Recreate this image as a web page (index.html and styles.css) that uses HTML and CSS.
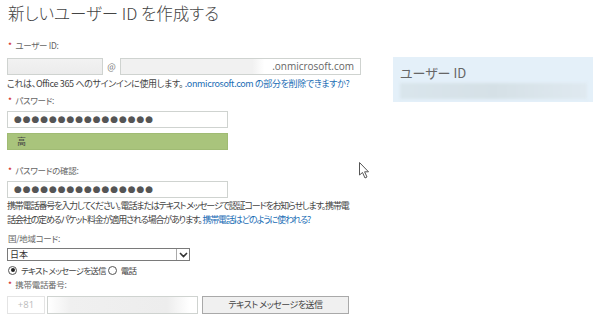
FILE: index.html
```html
<!DOCTYPE html>
<html lang="ja">
<head>
<meta charset="utf-8">
<title>新しいユーザー ID を作成する</title>
<link rel="stylesheet" href="styles.css">
</head>
<body>
<div class="page">
  <div class="form">
    <h1 class="title">新しいユーザー ID を作成する</h1>

    <div class="label l-user"><span class="req">*</span> ユーザー ID:</div>
    <div class="row-user">
      <div class="input input-name"></div>
      <span class="at">@</span>
      <div class="input input-domain"><span class="domain">.onmicrosoft.com</span></div>
    </div>
    <div class="help">これは、Office 365 へのサインインに使用します。 <a class="link" href="#">.onmicrosoft.com の部分を削除できますか?</a></div>

    <div class="label l-pass"><span class="req">*</span> パスワード:</div>
    <div class="input input-pass"><span class="dots">●●●●●●●●●●●●●●●●</span></div>
    <div class="strength">高</div>

    <div class="label l-confirm"><span class="req">*</span> パスワードの確認:</div>
    <div class="input input-pass input-confirm"><span class="dots">●●●●●●●●●●●●●●●●</span></div>
    <p class="para">携帯電話番号を入力してください。電話またはテキスト メッセージで認証コードをお知らせします。携帯電<br>話会社の定めるパケット料金が適用される場合があります。 <a class="link" href="#">携帯電話はどのように使われる?</a></p>

    <div class="label l-country">国/地域コード:</div>
    <div class="select"><span class="sel-text">日本</span><span class="sel-btn"><svg width="9" height="6" viewBox="0 0 9 6"><path d="M1 1 L4.5 4.5 L8 1" fill="none" stroke="#333" stroke-width="1.6"/></svg></span></div>
    <div class="radios">
      <span class="radio on"></span><span class="r-label">テキスト メッセージを送信</span>
      <span class="radio"></span><span class="r-label">電話</span>
    </div>

    <div class="label l-phone"><span class="req">*</span> 携帯電話番号:</div>
    <div class="row-phone">
      <div class="cc">+81</div>
      <div class="input input-phone"></div>
      <div class="btn">テキスト メッセージを送信</div>
    </div>
  </div>

  <div class="side">
    <div class="side-title">ユーザー ID</div>
    <div class="side-blur"></div>
  </div>
</div>
<svg class="cursor" width="12" height="18" viewBox="0 0 12 18"><path d="M0.5 0.5 L0.5 13 L3.5 10.5 L6 16 L8 15 L5.6 9.8 L9.5 9.8 Z" fill="#fff" stroke="#555" stroke-width="1"/></svg>
</body>
</html>
```
FILE: styles.css
```css
html, body {
  margin: 0;
  padding: 0;
  background: #fff;
}
body {
  width: 600px;
  height: 320px;
  overflow: hidden;
  position: relative;
  font-family: "Noto Sans CJK JP", "Noto Sans", sans-serif;
  font-feature-settings: "palt";
  color: #444;
}
.page {
  display: flex;
  align-items: flex-start;
}
.form {
  width: 386px;
  padding-left: 7px;
  flex: none;
}
.title {
  margin: 0 0 0 1px;
  font-size: 16.5px;
  font-weight: 300;
  line-height: 26px;
  color: #444;
  white-space: nowrap;
}
.label {
  font-size: 8.5px;
  line-height: 14px;
  color: #666;
  padding-left: 1px;
  white-space: nowrap;
  letter-spacing: -0.3px;
}
.req {
  color: #d02020;
  margin-right: 2px;
}
.l-user { margin-top: 12px; }
.l-pass { margin-top: 2px; }
.l-confirm { margin-top: 13px; }
.l-country { margin-top: 4px; }
.l-phone { margin-top: 0; }

.input {
  box-sizing: border-box;
  border: 1px solid #cfd3d0;
  background: #fff;
  height: 17px;
}
.row-user {
  display: flex;
  align-items: center;
  margin-top: 6px;
  height: 17px;
}
.input-name {
  width: 96px;
  background: linear-gradient(#f2f2f2, #ececec);
}
.at {
  font-size: 9px;
  color: #777;
  width: 17px;
  text-align: center;
}
.input-domain {
  width: 241px;
  display: flex;
  justify-content: flex-end;
  align-items: center;
  padding-right: 6px;
  background: linear-gradient(90deg, #f1f1f1 0, #f1f1f1 55%, #fff 60%);
}
.domain {
  font-family: "Open Sans", "Liberation Sans", sans-serif;
  font-size: 10px;
  color: #666;
  line-height: 15px;
}
.help {
  margin-top: 2px;
  font-size: 9px;
  line-height: 14px;
  color: #444;
  white-space: nowrap;
  letter-spacing: -0.35px;
}
.link {
  color: #1a6db5;
  text-decoration: none;
}
.input-pass {
  width: 221px;
  margin-top: 4px;
  display: flex;
  align-items: center;
  padding-left: 6px;
}
.dots {
  font-size: 9px;
  letter-spacing: 0.9px;
  color: #555;
  line-height: 15px;
  font-family: "DejaVu Sans", sans-serif;
}
.strength {
  width: 221px;
  height: 17px;
  box-sizing: border-box;
  margin-top: 5px;
  background: #a9c47c;
  border: 1px solid #a0bb74;
  font-size: 9px;
  line-height: 15px;
  padding-left: 9px;
  color: #444;
}
.input-confirm { margin-top: 4px; }
.para {
  margin: 1px 0 0 0;
  font-size: 9px;
  line-height: 14px;
  color: #444;
  white-space: nowrap;
  letter-spacing: -1.15px;
}
.select {
  margin-top: 3px;
  width: 183px;
  height: 13px;
  box-sizing: border-box;
  border: 1px solid #7a7a7a;
  display: flex;
  align-items: center;
  justify-content: space-between;
}
.sel-text {
  font-size: 9px;
  line-height: 11px;
  color: #333;
  padding-left: 2px;
}
.sel-btn {
  width: 13px;
  height: 11px;
  box-sizing: border-box;
  border-left: 1px solid #aaa;
  display: flex;
  align-items: center;
  justify-content: center;
}
.radios {
  margin-top: 2px;
  height: 14px;
  display: flex;
  align-items: center;
  font-size: 8.5px;
  color: #444;
  padding-left: 1px;
  letter-spacing: -0.8px;
  white-space: pre;
}
.radio {
  width: 9px;
  height: 9px;
  border: 1px solid #555;
  border-radius: 50%;
  box-sizing: border-box;
  position: relative;
  margin-right: 4px;
  flex: none;
}
.radio.on::after {
  content: "";
  position: absolute;
  left: 1.5px;
  top: 1.5px;
  width: 4px;
  height: 4px;
  border-radius: 50%;
  background: #222;
}
.r-label { margin-right: 2px; }

.row-phone {
  margin-top: 5px;
  display: flex;
  height: 18px;
  gap: 2px;
}
.cc {
  width: 38px;
  box-sizing: border-box;
  border: 1px solid #e4e4e4;
  font-family: "Open Sans", "Liberation Sans", sans-serif;
  font-size: 9.5px;
  color: #bbb;
  text-align: center;
  line-height: 16px;
}
.input-phone {
  width: 151px;
  height: 18px;
  background: linear-gradient(90deg, #fff 0, #f0f0f0 15%, #ededed 80%, #fff 95%);
}
.btn {
  margin-left: 2px;
  width: 147px;
  box-sizing: border-box;
  border: 1px solid #a9a9a9;
  background: #f0f0f0;
  font-size: 9px;
  line-height: 16px;
  text-align: center;
  color: #444;
  letter-spacing: -0.5px;
}

.side {
  margin-top: 57px;
  width: 200px;
  height: 45px;
  box-sizing: border-box;
  background: #e4f0f9;
  padding: 8px 6px 0 7px;
}
.side-title {
  font-size: 13px;
  line-height: 16px;
  color: #666;
}
.side-blur {
  margin-top: 2px;
  height: 16px;
  background: linear-gradient(90deg, #d9e5ec, #d5e0e6 50%, #dfe9f0);
  filter: blur(1.5px);
}
.cursor {
  position: absolute;
  left: 359px;
  top: 162px;
}
```
